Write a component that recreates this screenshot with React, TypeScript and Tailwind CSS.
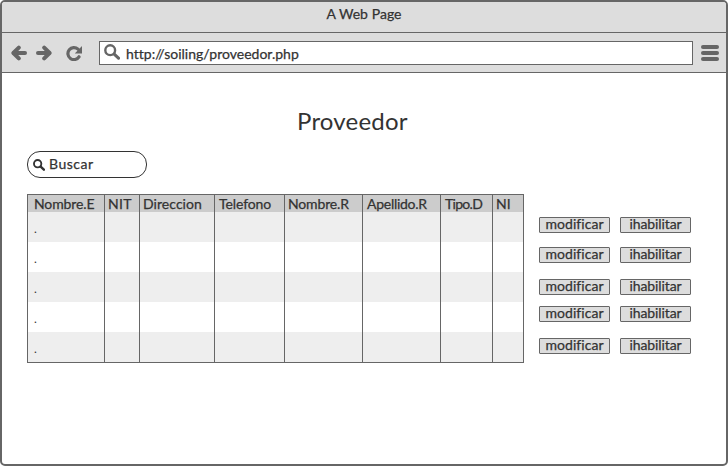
const columns = [
  { label: 'Nombre.E', cell: 'w-[77px] pl-1.5', text: 'tracking-[-0.12px]' },
  { label: 'NIT', cell: 'w-[35px] pl-[3px]', text: 'tracking-[0.3px]' },
  { label: 'Direccion', cell: 'w-[75px] pl-[3px]', text: 'tracking-[0.05px]' },
  { label: 'Telefono', cell: 'w-[70px] pl-1', text: 'tracking-[-0.1px]' },
  { label: 'Nombre.R', cell: 'w-[78px] pl-[3px]', text: 'tracking-[-0.15px]' },
  { label: 'Apellido.R', cell: 'w-[78px] pl-1', text: 'tracking-[-0.27px]' },
  { label: 'Tipo.D', cell: 'w-[52px] pl-1', text: 'tracking-[-0.7px]' },
  { label: 'NI', cell: 'w-[30px] pl-[3px]', text: 'tracking-[0px]' },
];

const actionGaps = ['mt-0', 'mt-3.5', 'mt-4', 'mt-[11px]', 'mt-4'];

function Arrow({ flip = false }: { flip?: boolean }) {
  return (
    <svg viewBox="0 0 16 16" className={flip ? 'h-4 w-4 rotate-180' : 'h-4 w-4'} fill="none" stroke="#666" strokeWidth="4" strokeLinecap="round" strokeLinejoin="round">
      <path d="M3 8H14" />
      <path d="M7.8 2.6L2.4 8L7.8 13.4" />
    </svg>
  );
}

function Search({ className, color, weight }: { className: string; color: string; weight: number }) {
  return (
    <svg viewBox="0 0 16 16" className={className} fill="none" stroke={color} strokeWidth={weight} strokeLinecap="round">
      <circle cx="6.2" cy="6.2" r="4.9" />
      <path d="M10.2 10.2L14.5 14.2" strokeWidth={weight + 0.7} />
    </svg>
  );
}

function Action({ label, text }: { label: string; text: string }) {
  return (
    <button className="flex h-4 w-[71px] justify-center rounded-[1px] border border-[#666] bg-[#ddd]">
      <span className={text}>{label}</span>
    </button>
  );
}

export default function App() {
  return (
    <div className="flex h-[466px] w-[728px] flex-col overflow-hidden rounded-[5px] border-2 border-[#666] bg-white font-['Lato','Liberation_Sans',sans-serif] text-sm leading-4 text-[#333] [-webkit-text-stroke:0.25px_#333]">
      <header className="h-[31px] border-b border-[#666] bg-[#ddd] pt-1 text-center">
        <span className="tracking-[0.05px]">A Web Page</span>
      </header>
      <nav className="flex h-10 items-center border-b border-[#666] bg-[#ddd] pl-[9px]">
        <Arrow />
        <div className="ml-[9px]"><Arrow flip /></div>
        <svg viewBox="0 0 17 16" className="ml-3.5 h-4 w-[17px]" fill="none">
          <path d="M12 4.2A6 6 0 1 0 13 11.8" stroke="#666" strokeWidth="3.2" strokeLinecap="round" />
          <path d="M16 1V8.5H8.8Z" fill="#666" />
        </svg>
        <div className="ml-[16px] flex h-6 w-[594px] items-center border border-[#666] bg-white pl-1">
          <Search className="mb-px h-4 w-4" color="#666" weight={2.4} />
          <span className="ml-1.5 mt-0.5 tracking-[0.01px]">http://soiling/proveedor.php</span>
        </div>
        <div className="ml-2 flex w-[18px] flex-col gap-0.5">
          <div className="h-1 rounded-sm bg-[#666]" />
          <div className="h-1 rounded-sm bg-[#666]" />
          <div className="h-1 rounded-sm bg-[#666]" />
        </div>
      </nav>
      <main className="flex flex-col pl-[25px]">
        <h1 className="ml-[270px] mt-[33px] text-2xl leading-[30px] tracking-[0.2px] [-webkit-text-stroke:0px]">Proveedor</h1>
        <div className="mt-[15px] flex h-[27px] w-[120px] items-center rounded-[13px] border border-[#333] pl-[5px]">
          <Search className="h-3 w-3" color="#333" weight={2.5} />
          <span className="mb-0.5 ml-1 tracking-[0.5px]">Buscar</span>
        </div>
        <div className="mt-4 flex items-start">
          <table className="flex w-[497px] flex-col border border-[#666]">
            <thead className="bg-[#ccc]">
              <tr className="flex h-[17px]">
                {columns.map((c) => (
                  <th key={c.label} className={`${c.cell} shrink-0 border-r border-[#666] pt-px text-left font-normal last:border-r-0`}>
                    <span className={c.text}>{c.label}</span>
                  </th>
                ))}
              </tr>
            </thead>
            <tbody>
              {actionGaps.map((_, row) => (
                <tr key={row} className="flex h-[30px] odd:bg-[#eee]">
                  {columns.map((c, i) => (
                    <td key={c.label} className={`${c.cell} shrink-0 border-r border-[#666] pt-[9px] text-xs leading-4 last:border-r-0 [-webkit-text-stroke:0px]`}>
                      {i === 0 ? '.' : ''}
                    </td>
                  ))}
                </tr>
              ))}
            </tbody>
          </table>
          <div className="ml-[15px] mt-[23px] flex flex-col leading-[13px]">
            {actionGaps.map((gap, i) => (
              <div key={i} className={`${gap} flex gap-2.5`}>
                <Action label="modificar" text="-mt-px tracking-[0.05px]" />
                <Action label="ihabilitar" text="-mt-px tracking-[-0.1px]" />
              </div>
            ))}
          </div>
        </div>
      </main>
    </div>
  );
}
